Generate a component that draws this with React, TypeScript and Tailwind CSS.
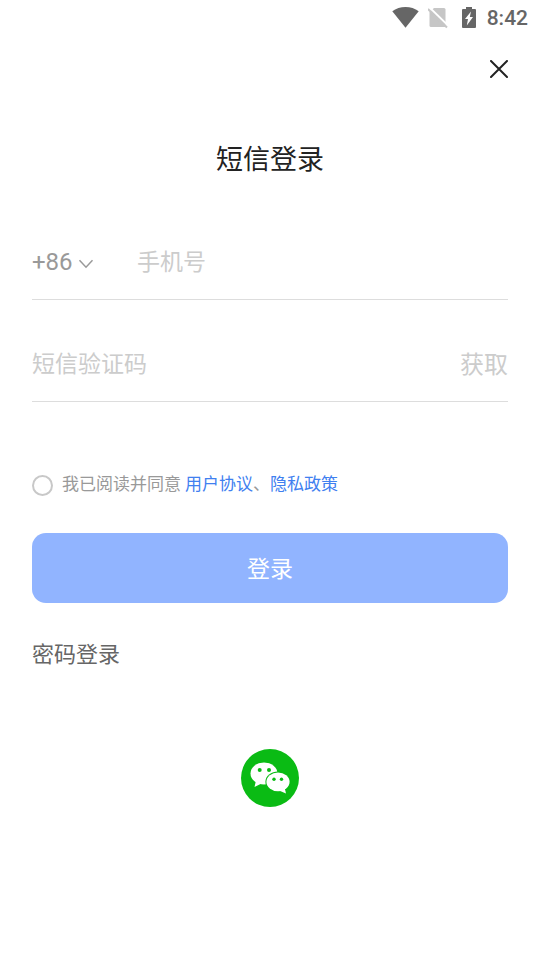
import { useState } from "react";

function StatusBar() {
  return (
    <div className="flex h-9 items-center justify-end pr-3 text-[#666666]">
      <svg className="mr-2 h-[22px] w-7" viewBox="0 0 28 22" fill="currentColor" aria-hidden="true">
        <path d="M13.500 20.800 .3 4.300C4 1.500 8.500 0 13.500 0S23 1.500 26.700 4.300z" />
      </svg>
      <svg className="mr-3 h-[22px] w-[22px]" viewBox="0 0 22 22" aria-hidden="true">
        <path d="M6 1h10a1.500 1.500 0 0 1 1.500 1.500V20H3a1.500 1.500 0 0 1-1.500-1.500V5z" fill="#c6c6c6" />
        <path d="M1 0 20 18.500" stroke="#fff" strokeWidth="2" />
        <path d="M0 2 19 20.500" stroke="#c6c6c6" strokeWidth="2" />
      </svg>
      <svg className="mr-[11px] h-[22px] w-[14px]" viewBox="0 0 14 22" aria-hidden="true">
        <path d="M4 0h6v2h3a1 1 0 0 1 1 1v17a1 1 0 0 1-1 1H1a1 1 0 0 1-1-1V3a1 1 0 0 1 1-1h3z" fill="currentColor" />
        <path d="M9 4.500 3 12h3l-1.200 6.500L11 10H7.800z" fill="#fff" />
      </svg>
      <span className="text-[21px] leading-6 font-medium">8:42</span>
    </div>
  );
}

function WechatIcon() {
  return (
    <svg className="h-[58px] w-[58px]" viewBox="0 0 58 58" aria-hidden="true">
      <circle cx="29" cy="29" r="29" fill="#0abb14" />
      <ellipse cx="23" cy="24.500" rx="13.500" ry="11" fill="#fff" />
      <path d="M15 31.500 13.500 38l7-3.500z" fill="#fff" />
      <circle cx="18.700" cy="21" r="2" fill="#0abb14" />
      <circle cx="28" cy="21" r="2" fill="#0abb14" />
      <ellipse cx="37" cy="32.800" rx="12.600" ry="10.400" fill="#0abb14" />
      <ellipse cx="37" cy="32.800" rx="11.600" ry="9.400" fill="#fff" />
      <path d="M38 41.500 45 44.500 43.500 38z" fill="#fff" />
      <circle cx="33" cy="30.300" r="1.700" fill="#0abb14" />
      <circle cx="40.500" cy="30.300" r="1.700" fill="#0abb14" />
    </svg>
  );
}

function App() {
  const [phone, setPhone] = useState("");
  const [code, setCode] = useState("");
  const [agreed, setAgreed] = useState(false);

  return (
    <div className="min-h-screen bg-white font-[Roboto,'Noto_Sans_CJK_SC',sans-serif]">
      <StatusBar />

      <header className="flex h-[66px] items-center justify-end px-6">
        <button type="button" aria-label="关闭" className="p-2 text-[#222222]">
          <svg className="h-[18px] w-[18px]" viewBox="0 0 18 18" fill="none" stroke="currentColor" strokeWidth="2" strokeLinecap="round">
            <path d="M1 1l16 16M17 1 1 17" />
          </svg>
        </button>
      </header>

      <main className="px-8">
        <h1 className="mt-[38px] text-center text-[27px] leading-10 text-[#222222]">短信登录</h1>

        <form onSubmit={(e) => e.preventDefault()}>
          <div className="mt-11 flex h-[76px] items-center border-b border-[#dddddd]">
            <div className="relative flex items-center text-[#999999]">
              <select aria-label="国家代码" className="w-[62px] appearance-none bg-transparent text-2xl outline-none">
                <option>+86</option>
              </select>
              <svg className="pointer-events-none absolute right-0 mt-1 h-[10px] w-4" viewBox="0 0 16 10" fill="none" stroke="currentColor" strokeWidth="1.500" aria-hidden="true">
                <path d="M1.500 1.200 8 8.200l6.500-7" />
              </svg>
            </div>
            <input
              type="tel"
              aria-label="手机号"
              placeholder="手机号"
              value={phone}
              onChange={(e) => setPhone(e.target.value)}
              className="ml-[43px] min-w-0 flex-1 bg-transparent pt-0.5 text-[23px] leading-8 text-[#222222] outline-none placeholder:text-[#cccccc]"
            />
          </div>

          <div className="mt-[26px] flex h-[76px] items-center border-b border-[#dddddd]">
            <input
              type="text"
              inputMode="numeric"
              aria-label="短信验证码"
              placeholder="短信验证码"
              value={code}
              onChange={(e) => setCode(e.target.value)}
              className="min-w-0 flex-1 bg-transparent pt-0.5 text-[23px] leading-8 text-[#222222] outline-none placeholder:text-[#cccccc]"
            />
            <button type="button" className="pt-0.5 text-2xl text-[#cccccc]">
              获取
            </button>
          </div>

          <div className="mt-[70px] flex items-center text-[17px] leading-6 text-[#999999]">
            <input
              id="agree"
              type="checkbox"
              checked={agreed}
              onChange={(e) => setAgreed(e.target.checked)}
              className="mt-[3px] mr-[9px] h-[21px] w-[21px] appearance-none rounded-full border-2 border-[#c8c8c8] checked:border-[#4080f0] checked:bg-[#4080f0]"
            />
            <label htmlFor="agree" className="mr-1">
              我已阅读并同意
            </label>
            <a href="#agreement" className="text-[#4080f0]">
              用户协议
            </a>
            <span>、</span>
            <a href="#privacy" className="text-[#4080f0]">
              隐私政策
            </a>
          </div>

          <button type="submit" className="mt-[37px] h-[70px] w-full rounded-[14px] bg-[#91b4ff] pt-1 text-[23px] text-white">
            登录
          </button>
        </form>

        <button type="button" className="mt-9 text-[22px] leading-8 text-[#666666]">
          密码登录
        </button>

        <div className="mt-[78px] flex justify-center">
          <button type="button" aria-label="微信登录" className="rounded-full">
            <WechatIcon />
          </button>
        </div>
      </main>
    </div>
  );
}

export default App;
